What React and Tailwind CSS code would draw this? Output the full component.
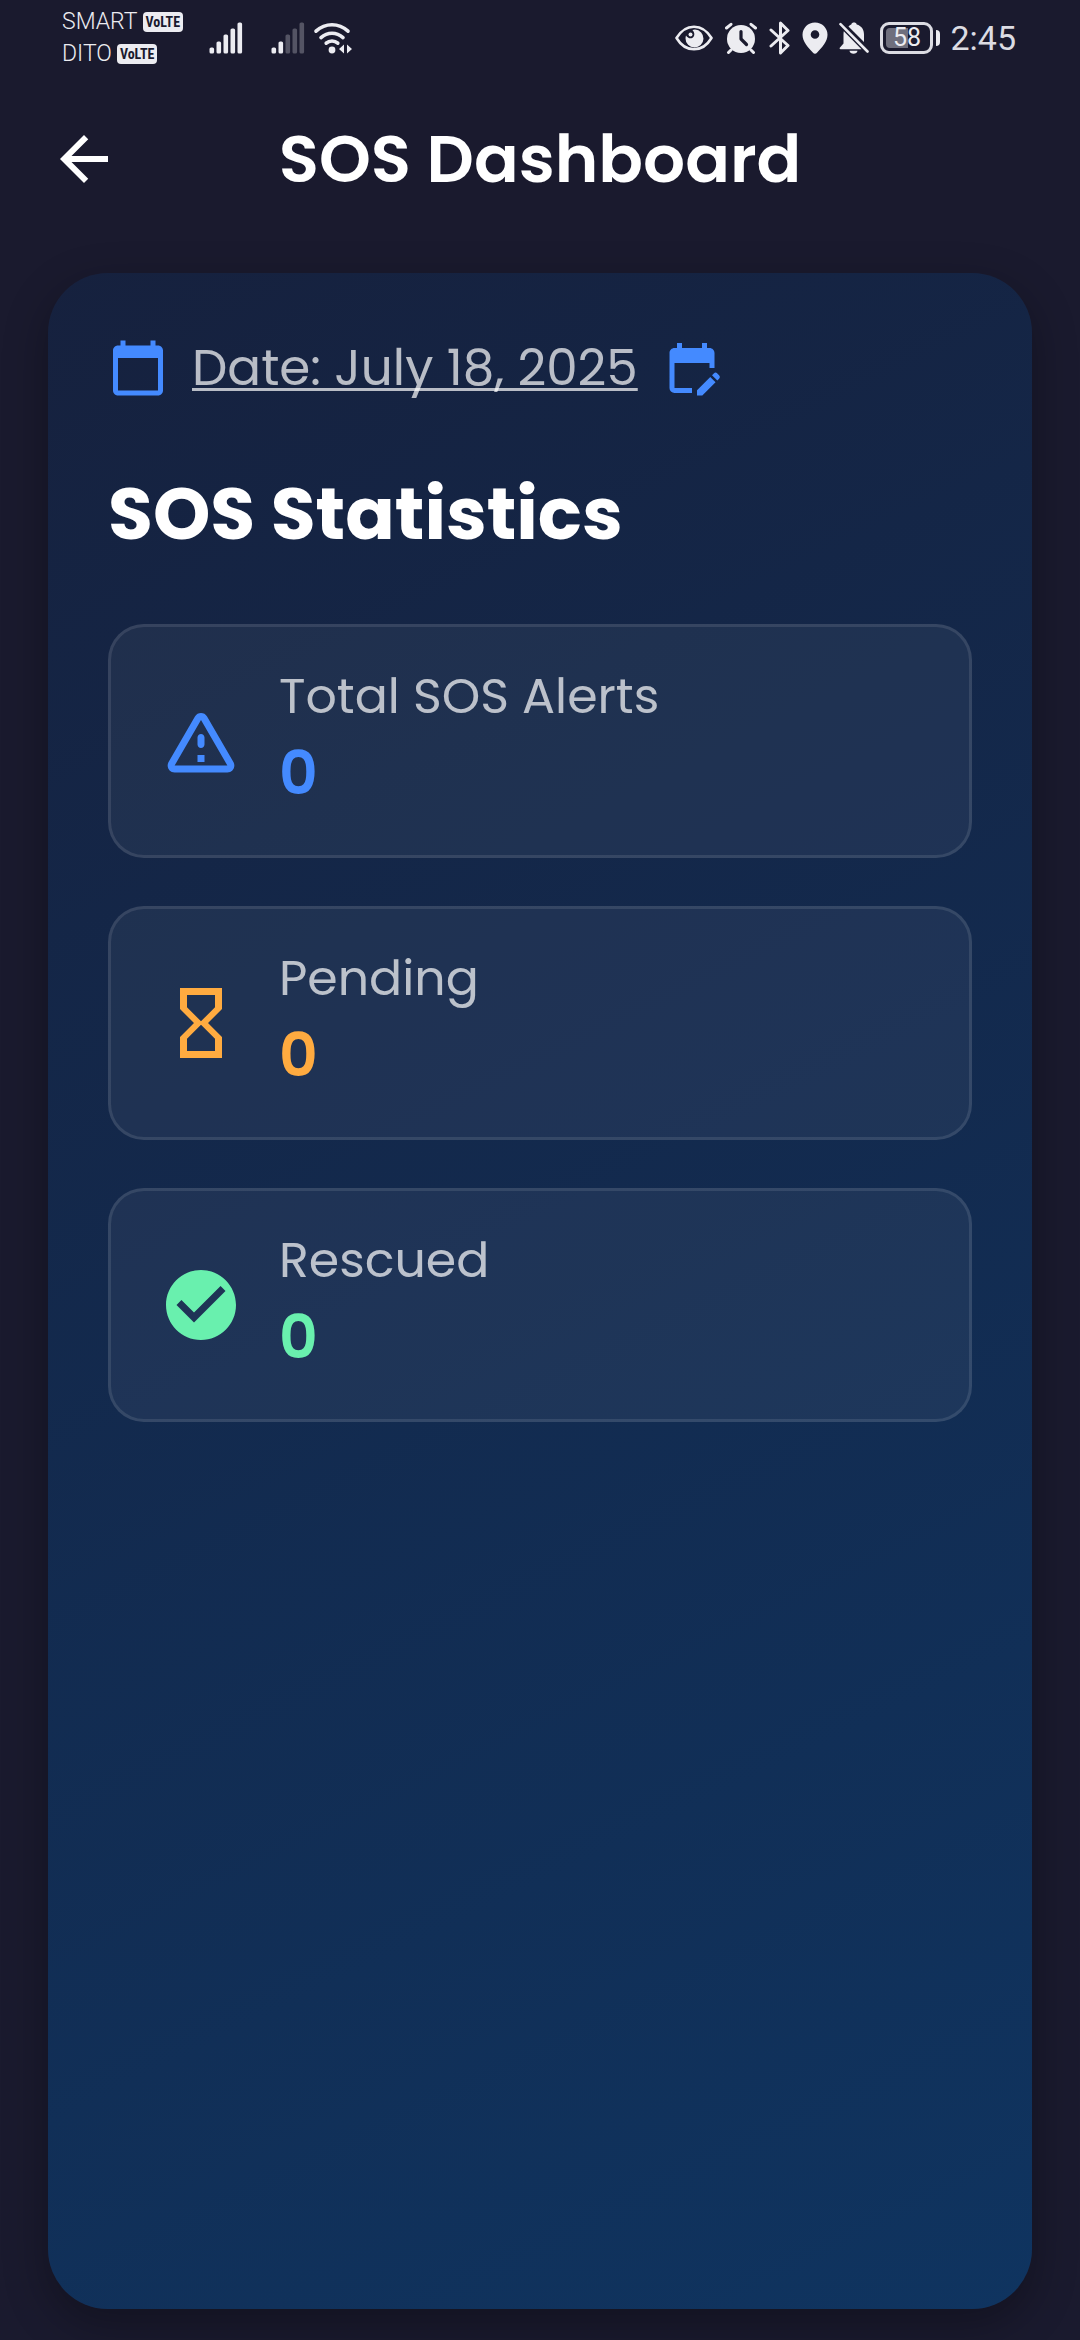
import React from "react";
import {
  MdArrowBack,
  MdCalendarToday,
  MdCheckCircle,
  MdEditCalendar,
  MdHourglassEmpty,
} from "react-icons/md";

function WarningIcon({ className }) {
  return (
    <svg viewBox="0 0 24 24" fill="currentColor" className={className} aria-hidden="true">
      <path d="M12 5.99 19.53 19H4.47L12 5.99M2.74 18c-.77 1.33.19 3 1.73 3h15.06c1.54 0 2.5-1.67 1.73-3L13.73 4.99c-.77-1.33-2.69-1.33-3.46 0L2.74 18zM11 11v2c0 .55.45 1 1 1s1-.45 1-1v-2c0-.55-.45-1-1-1s-1 .45-1 1zm0 5h2v2h-2z" />
    </svg>
  );
}

const BARS = [
  { x: 0, h: 6 },
  { x: 7, h: 12 },
  { x: 14, h: 19 },
  { x: 21, h: 25 },
  { x: 28, h: 31 },
];

function Signal({ level }) {
  return (
    <svg width="34" height="32" viewBox="0 0 34 32" aria-hidden="true">
      {BARS.map((b, i) => (
        <rect
          key={b.x}
          x={b.x + 0.5}
          y={31.5 - b.h}
          width="4.6"
          height={b.h}
          rx="1.6"
          fill="#ececf1"
          opacity={i < level ? 1 : 0.28}
        />
      ))}
    </svg>
  );
}

function Wifi() {
  return (
    <svg width="40" height="32" viewBox="0 0 40 32" fill="none" stroke="#ececf1" aria-hidden="true">
      <g strokeWidth="3.6" strokeLinecap="round">
        <path d="M3 9.2C12.5.6 25.5.6 35 9.2" />
        <path d="M8 15.6C14.5 9.8 23.5 9.8 30 15.6" />
        <path d="M13.2 21.2C16.5 18.2 21.5 18.2 24.8 21.2" />
      </g>
      <circle cx="19" cy="28" r="3.4" fill="#ececf1" stroke="none" />
      <path d="m26 27 5-4.5v9zM39 27l-5-4.5v9z" fill="#ececf1" stroke="none" />
    </svg>
  );
}

function Eye() {
  return (
    <svg width="38" height="32" viewBox="0 0 38 32" fill="none" aria-hidden="true">
      <path
        d="M1.5 16C6 8.5 12 4.7 19 4.7S32 8.5 36.5 16C32 23.5 26 27.3 19 27.3S6 23.5 1.5 16z"
        stroke="#ececf1"
        strokeWidth="2.6"
        strokeLinejoin="round"
      />
      <path
        d="M20 7.5a9 9 0 1 1-9.5 9c0-1 .2-2 .5-3 1.5 2.2 3.5 3.3 5.5 2.7 3.2-.9 4-5 .9-8.2.8-.3 1.7-.5 2.6-.5z"
        fill="#ececf1"
      />
      <circle cx="15.5" cy="12.5" r="2" fill="#ececf1" />
    </svg>
  );
}

function Alarm() {
  return (
    <svg width="34" height="32" viewBox="0 0 34 32" fill="none" aria-hidden="true">
      <g stroke="#ececf1" strokeWidth="3" strokeLinecap="round">
        <path d="M2.5 6 7 2.3M31.5 6 27 2.3M7 28l-2.5 2.5M27 28l2.5 2.5" />
      </g>
      <circle cx="17" cy="17" r="14" fill="#ececf1" />
      <path
        d="M17 9.5V17l5.5 5.5"
        stroke="#1a1a2e"
        strokeWidth="3.2"
        strokeLinecap="round"
        strokeLinejoin="round"
      />
    </svg>
  );
}

function Bluetooth() {
  return (
    <svg width="22" height="34" viewBox="0 0 22 34" fill="none" aria-hidden="true">
      <path
        d="m2 9 17 15.5-7.5 7.5V2L19 9.5 2 25"
        stroke="#ececf1"
        strokeWidth="3"
        strokeLinecap="round"
        strokeLinejoin="round"
      />
    </svg>
  );
}

function Pin() {
  return (
    <svg width="26" height="32" viewBox="0 0 26 32" aria-hidden="true">
      <path
        d="M13 .5C6 .5.5 6 .5 12.8c0 7 5.5 12.7 10.3 17.7a3 3 0 0 0 4.4 0c4.8-5 10.3-10.7 10.3-17.7C25.5 6 20 .5 13 .5zm0 16.3a4.3 4.3 0 1 1 0-8.6 4.3 4.3 0 0 1 0 8.6z"
        fill="#ececf1"
      />
    </svg>
  );
}

function BellOff() {
  return (
    <svg width="30" height="32" viewBox="0 0 30 32" fill="#ececf1" aria-hidden="true">
      <path d="M9.5 4.6C10.5 3.4 11.5 2.7 12.3 2.5c.5-2.6 4.9-2.6 5.4 0 4.8 1.3 7.3 5 7.3 10V20z" />
      <path d="M4.8 9.2 22.5 27.3H1.5C.5 27.3.3 26.3 1 25.6l3.5-4V12.5c0-1.2.1-2.3.3-3.3z" />
      <path d="M10.5 28.7h8c-.3 4-7.7 4-8 0z" />
      <path d="M1.5 2.2 28.5 29.5" stroke="#ececf1" strokeWidth="2.6" strokeLinecap="round" />
    </svg>
  );
}

function Battery({ percent }) {
  return (
    <div className="flex items-center gap-[3px]">
      <div className="relative flex h-8 w-[53px] items-center justify-center rounded-[9px] border-[3px] border-[#dcdce3]">
        <div className="absolute inset-y-[3px] left-[3px] w-[22px] rounded-l-sm bg-[#6f6f7d]" />
        <span className="relative text-[25px] leading-none text-[#ececf1]">{percent}</span>
      </div>
      <div className="h-4 w-1 rounded-r-full bg-[#ececf1]" />
    </div>
  );
}

function Carrier({ name }) {
  return (
    <div className="flex items-center gap-[5px]">
      <span className="text-[23px] leading-8 font-light text-[#ececf1]">{name}</span>
      <span className="flex h-5 items-center rounded-[4px] bg-[#ececf1] px-[3px] font-['Roboto_Condensed','Roboto',sans-serif] text-[14px] leading-none font-bold text-[#1a1a2e]">
        VoLTE
      </span>
    </div>
  );
}

function StatusBar() {
  return (
    <div className="flex h-[75px] items-center justify-between pr-16 pl-[62px] font-['Roboto',sans-serif]">
      <div className="flex items-center">
        <div className="w-[147px]">
          <Carrier name="SMART" />
          <Carrier name="DITO" />
        </div>
        <div className="flex items-center">
          <Signal level={5} />
          <div className="ml-7 flex items-center gap-2">
            <Signal level={2} />
            <Wifi />
          </div>
        </div>
      </div>
      <div className="flex items-center gap-[10px]">
        <div className="flex items-center gap-[11px]">
          <Eye />
          <Alarm />
          <Bluetooth />
          <Pin />
          <BellOff />
          <Battery percent={58} />
        </div>
        <span className="text-[34px] leading-none text-[#dcdce3]">2:45</span>
      </div>
    </div>
  );
}

const STATS = [
  { label: "Total SOS Alerts", value: 0, Icon: WarningIcon, tone: "text-[#448aff]" },
  { label: "Pending", value: 0, Icon: MdHourglassEmpty, tone: "text-[#ffab40]" },
  { label: "Rescued", value: 0, Icon: MdCheckCircle, tone: "text-[#69f0ae]" },
];

function StatCard({ label, value, Icon, tone }) {
  return (
    <li className="flex items-center gap-9 rounded-[36px] border-[3px] border-white/10 bg-white/5 px-12 py-[37px]">
      <Icon className={`size-[84px] shrink-0 ${tone}`} />
      <div className="flex flex-col gap-0.5 pt-0.5">
        <p className="text-[49px] leading-[60px] text-white/70">{label}</p>
        <p className={`text-[60px] leading-[90px] font-semibold ${tone}`}>{value}</p>
      </div>
    </li>
  );
}

export default function App() {
  return (
    <div className="flex min-h-screen flex-col bg-[#1a1a2e] font-['Poppins','Inter',sans-serif] text-white">
      <StatusBar />
      <header className="grid h-[168px] grid-cols-[72px_1fr_72px] items-center px-12">
        <button type="button" aria-label="Back">
          <MdArrowBack className="size-[72px]" />
        </button>
        <h1 className="text-center text-[66px] leading-[90px] font-semibold">SOS Dashboard</h1>
      </header>
      <main className="mx-12 mt-[30px] mb-[31px] flex-1 rounded-[60px] bg-[linear-gradient(154deg,#16213e,#0f3460)] p-[60px] shadow-[0_15px_45px_rgba(0,0,0,0.3)]">
        <button type="button" className="flex h-[70px] items-center gap-6">
          <MdCalendarToday className="size-[60px] text-[#448aff]" />
          <span className="text-[50px] leading-[60px] text-white/70 underline decoration-[3px] underline-offset-[3px] [text-decoration-skip-ink:none]">
            Date: July 18, 2025
          </span>
          <MdEditCalendar className="size-[60px] text-[#448aff]" />
        </button>
        <h2 className="mt-[57px] text-[73px] leading-[108px] font-bold">SOS Statistics</h2>
        <ul className="mt-14 flex flex-col gap-12">
          {STATS.map((s) => (
            <StatCard key={s.label} {...s} />
          ))}
        </ul>
      </main>
    </div>
  );
}
